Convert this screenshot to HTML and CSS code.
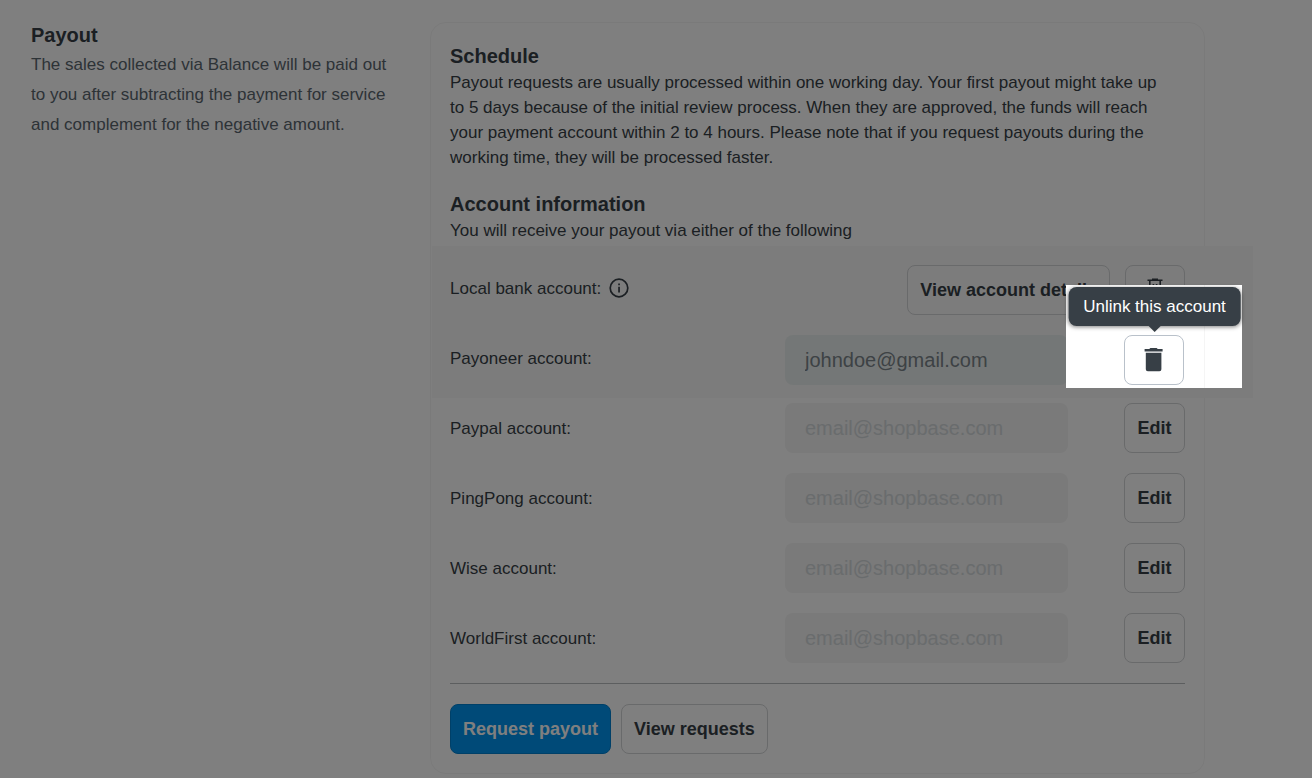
FILE: index.html
```html
<!doctype html>
<html lang="en">
<head>
    <meta charset="utf-8"/>
    <title>Payout</title>
    <link rel="stylesheet" href="styles.css">
</head>
<body>
    <main class="page">
        <section class="intro">
            <h2>Payout</h2>
            <p>The sales collected via Balance will be paid out<br>
            to you after subtracting the payment for service<br>
            and complement for the negative amount.</p>
        </section>

        <form class="card">
            <h3>Schedule</h3>
            <p class="schedule">Payout requests are usually processed within one working day. Your first payout might take up<br>
            to 5 days because of the initial review process. When they are approved, the funds will reach<br>
            your payment account within 2 to 4 hours. Please note that if you request payouts during the<br>
            working time, they will be processed faster.</p>

            <h3>Account information</h3>
            <p>You will receive your payout via either of the following</p>

            <div class="rows linked">
                <div class="row">
                    <span class="label">Local bank account:
                        <svg class="info" viewBox="0 0 20 20" width="20" height="20">
                            <circle cx="10" cy="10" r="8.8" fill="none" stroke="currentColor" stroke-width="1.7"/>
                            <path d="M9.2 5.4h1.7v1.8H9.2zM9.2 8.8h1.7v5.6H9.2z" fill="currentColor"/>
                        </svg>
                    </span>
                    <button type="button" class="btn details">View account details</button>
                    <button type="button" class="btn icon" aria-label="Unlink local bank account">
                        <svg viewBox="0 0 20 24" width="20" height="24">
                            <path d="M2.5 2.2h15M7 1.2h6M4.8 3v18.5h10.4V3M8.4 6v11M11.6 6v11" fill="none" stroke="currentColor" stroke-width="1.6"/>
                        </svg>
                    </button>
                </div>
                <div class="row">
                    <label class="label" for="payoneer">Payoneer account:</label>
                    <input class="field" id="payoneer" type="email" value="johndoe@gmail.com" readonly>
                    <div class="action">
                        <div class="spotlight"></div>
                        <div class="tooltip" id="unlink-tip" role="tooltip">Unlink this account</div>
                        <button type="button" class="btn icon" aria-label="Unlink Payoneer account" aria-describedby="unlink-tip">
                            <svg viewBox="0 0 20 24" width="20" height="24">
                                <path d="M.6 1h4.6L6.4 0h6.2l1.2 1h4.8v2.6H.6zM1.8 4.8h15.6v16.4a2 2 0 0 1-2 2H3.8a2 2 0 0 1-2-2z" fill="currentColor"/>
                            </svg>
                        </button>
                    </div>
                </div>
            </div>

            <div class="rows">
                <div class="row">
                    <label class="label" for="paypal">Paypal account:</label>
                    <input class="field" id="paypal" type="email" placeholder="email@shopbase.com">
                    <button type="button" class="btn edit">Edit</button>
                </div>
                <div class="row">
                    <label class="label" for="pingpong">PingPong account:</label>
                    <input class="field" id="pingpong" type="email" placeholder="email@shopbase.com">
                    <button type="button" class="btn edit">Edit</button>
                </div>
                <div class="row">
                    <label class="label" for="wise">Wise account:</label>
                    <input class="field" id="wise" type="email" placeholder="email@shopbase.com">
                    <button type="button" class="btn edit">Edit</button>
                </div>
                <div class="row">
                    <label class="label" for="worldfirst">WorldFirst account:</label>
                    <input class="field" id="worldfirst" type="email" placeholder="email@shopbase.com">
                    <button type="button" class="btn edit">Edit</button>
                </div>
            </div>

            <div class="footer">
                <button type="button" class="btn primary">Request payout</button>
                <button type="button" class="btn">View requests</button>
            </div>
        </form>
    </main>
</body>
</html>
```
FILE: styles.css
```css
* {
    box-sizing:border-box;
}
body {
    margin:0;
    background:#ffffff;
    color:#373f46;
    font-family:"Liberation Sans", Arial, sans-serif;
    font-size:17px;
    line-height:25px;
}
h2, h3, p {
    margin:0;
}
h2, h3 {
    font-size:20px;
    line-height:28px;
}

.page {
    display:grid;
    grid-template-columns:1fr 2.1fr;
    gap:30px;
    padding:22px 107px 4px 31px;
}
.intro h2 {
    margin-bottom:2px;
    line-height:26px;
}
.intro p {
    color:#5b666f;
    line-height:30px;
}
.card {
    padding:19px;
    border:1px solid #f5f5f5;
    border-radius:16px;
}
.schedule {
    margin-bottom:20px;
}

.rows {
    display:grid;
    gap:20px;
    padding-top:5px;
}
/* the linked accounts sit on a band that runs past the card */
.linked {
    margin:3px -68px 0 -18px;
    padding:19px 68px 13px 18px;
    background:#f8f8f8;
}
.row {
    display:flex;
    align-items:center;
}
.label {
    flex:1;
    display:flex;
    align-items:center;
    gap:8px;
}
.linked .label {
    padding-bottom:4px;
}
.field {
    flex:0 1 283px;
    min-width:0;
    height:50px;
    padding:0 20px;
    border:0;
    border-radius:8px;
    background:#f4f4f4;
    color:#373f46;
    font:20px "Liberation Sans", Arial, sans-serif;
}
.field::placeholder {
    color:#d3d8db;
    opacity:1;
}
.linked .field {
    background:#e9efee;
    color:#7b848a;
}

.btn {
    height:50px;
    padding:0 12px;
    border:1px solid #d2d4d6;
    border-radius:8px;
    background:transparent;
    color:#373f46;
    font:bold 18px "Liberation Sans", Arial, sans-serif;
    white-space:nowrap;
}
.icon {
    width:60px;
    padding:0;
}
.icon svg {
    display:block;
    margin:0 auto;
}
.details {
    margin-right:15px;
}
.edit {
    width:61px;
    margin-left:56px;
    padding:0;
}
.primary {
    border-color:#0080d0;
    background:#0094f0;
    color:#ffffff;
}

.action {
    position:relative;
    width:61px;
    margin-left:56px;
}
.action .btn {
    position:relative;
    display:block;
    border-color:#b9c1ca;
    background:#ffffff;
}
/* dims everything except the box round the unlink button */
.spotlight {
    position:absolute;
    inset:-50px -57px -3px -58px;
    background:#ffffff;
    box-shadow:0 0 0 200vmax rgba(0, 0, 0, .5);
}
/* card edge */
.spotlight::after {
    content:"";
    position:absolute;
    top:0;
    bottom:0;
    right:37px;
    border-left:1px solid #f5f5f5;
}
.tooltip {
    position:absolute;
    z-index:1;
    bottom:calc(100% + 9px);
    left:50%;
    transform:translateX(-50%);
    padding:7px 15px;
    border-radius:8px;
    background:#373f46;
    box-shadow:0 1px 4px rgba(0, 0, 0, .5);
    color:#ffffff;
    white-space:nowrap;
}
.tooltip::after {
    content:"";
    position:absolute;
    top:100%;
    left:50%;
    margin-left:-6px;
    border:6px solid transparent;
    border-top-color:#373f46;
    border-bottom:0;
}

.footer {
    display:flex;
    gap:10px;
    margin-top:20px;
    padding-top:20px;
    border-top:1px solid #b9bcbf;
}
```
